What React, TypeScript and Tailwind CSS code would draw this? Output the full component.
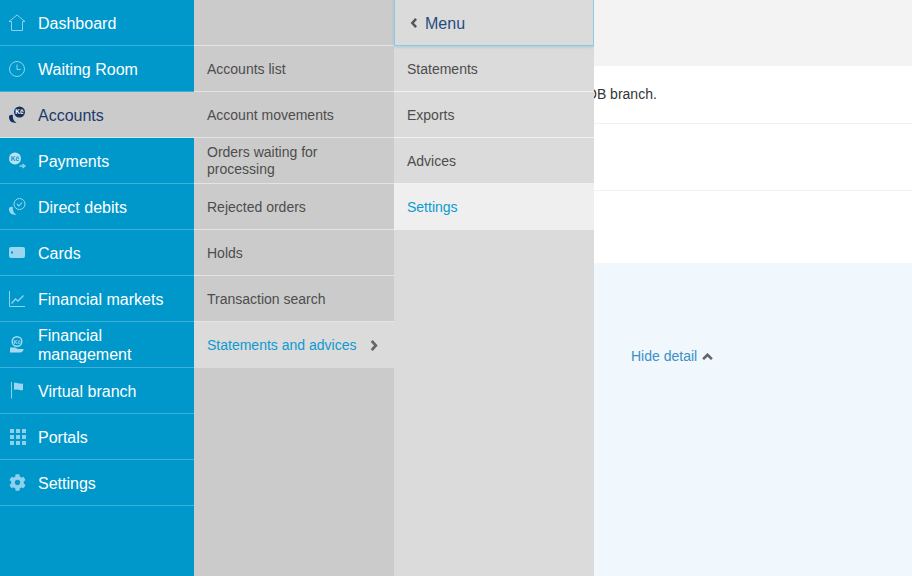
import React from 'react';
import { FaCog } from 'react-icons/fa';

const iconClass = 'w-[18px] h-[18px] text-[#8fd0ec]';

const HomeIcon = () => (
  <svg viewBox="0 0 18 18" className={iconClass} fill="none" stroke="currentColor" strokeWidth="1">
    <path d="M9 1 L17 7.5 H14.5 V16.5 H3.5 V7.5 H1 Z" />
  </svg>
);

const ClockIcon = () => (
  <svg viewBox="0 0 18 18" className={iconClass} fill="none" stroke="currentColor" strokeWidth="1">
    <circle cx="9" cy="9" r="7.5" />
    <path d="M9 4.5 V9.5 H12.5" />
  </svg>
);

const CoinIcon = () => (
  <svg viewBox="0 0 18 18" className="w-[18px] h-[18px]">
    <path d="M1 11 C1 15 4 17.5 8.5 16.5 C6 15.5 4.5 13 4.8 9 C2.5 8.5 1 9.5 1 11 Z" fill="#12305f" />
    <circle cx="11.5" cy="6" r="5.5" fill="#12305f" />
    <text x="11.5" y="8.3" textAnchor="middle" fontSize="6.5" fontWeight="700" fontFamily="Liberation Sans" fill="#ffffff">Kč</text>
  </svg>
);

const PaymentIcon = () => (
  <svg viewBox="0 0 18 18" className="w-[18px] h-[18px]">
    <circle cx="7" cy="6.5" r="6" fill="#b8e1f4" />
    <text x="7" y="8.8" textAnchor="middle" fontSize="6.5" fontWeight="700" fontFamily="Liberation Sans" fill="#0098cb">Kč</text>
    <path d="M11.5 14 H16.5 M14.5 12 L17 14 L14.5 16" stroke="#8fd0ec" strokeWidth="1.4" fill="none" />
  </svg>
);

const DebitIcon = () => (
  <svg viewBox="0 0 18 18" className="w-[18px] h-[18px]">
    <path d="M1 11 C1 15 4 17.5 8.5 16.5 C6 15.5 4.5 13 4.8 9 C2.5 8.5 1 9.5 1 11 Z" fill="#9ad6f0" />
    <circle cx="11.5" cy="6" r="5.5" fill="none" stroke="#9ad6f0" strokeWidth="1" />
    <path d="M9 6 L11 8 L14 4.5" fill="none" stroke="#9ad6f0" strokeWidth="1.1" />
  </svg>
);

const CardIcon = () => (
  <svg viewBox="0 0 18 18" className="w-[18px] h-[18px]">
    <rect x="1" y="3" width="16" height="11" rx="2" fill="#9ad6f0" />
    <rect x="3" y="7.5" width="2" height="2" fill="#0098cb" />
  </svg>
);

const ChartIcon = () => (
  <svg viewBox="0 0 18 18" className={iconClass} fill="none" stroke="currentColor" strokeWidth="1">
    <path d="M1.5 1 V16.5 H17" />
    <path d="M3.5 13.5 L7.5 9 L10 11 L15.5 5.5" strokeWidth="1.4" />
  </svg>
);

const HandIcon = () => (
  <svg viewBox="0 0 18 18" className="w-[18px] h-[18px]">
    <circle cx="9" cy="5.5" r="4.8" fill="none" stroke="#a5d9f0" strokeWidth="1.4" />
    <text x="9" y="7.6" textAnchor="middle" fontSize="5.5" fontWeight="700" fontFamily="Liberation Sans" fill="#a5d9f0">Kč</text>
    <path d="M2 11.5 H7 L10 13 H15.5 C15.5 15 14 16.5 12 16.5 H2 Z" fill="#a5d9f0" />
  </svg>
);

const FlagIcon = () => (
  <svg viewBox="0 0 18 18" className="w-[18px] h-[18px]">
    <path d="M3.5 0 V16.5" stroke="#8fd0ec" strokeWidth="1" />
    <path d="M6 1 C9 0 11 2.5 15 1.5 V8 C11 9 9 6.5 6 8 Z" fill="#9ad6f0" />
  </svg>
);

const GridIcon = () => (
  <svg viewBox="0 0 18 18" className="w-[18px] h-[18px]" fill="#8fd0ec">
    {[1, 7, 13].map(y =>
      [2, 8, 14].map(x => <rect key={`${x}-${y}`} x={x} y={y} width="4" height="4" />)
    )}
  </svg>
);

const navItems = [
  { label: 'Dashboard', icon: <HomeIcon /> },
  { label: 'Waiting Room', icon: <ClockIcon /> },
  { label: 'Accounts', icon: <CoinIcon />, active: true },
  { label: 'Payments', icon: <PaymentIcon /> },
  { label: 'Direct debits', icon: <DebitIcon /> },
  { label: 'Cards', icon: <CardIcon /> },
  { label: 'Financial markets', icon: <ChartIcon /> },
  { label: 'Financial management', icon: <HandIcon />, wrapped: true },
  { label: 'Virtual branch', icon: <FlagIcon /> },
  { label: 'Portals', icon: <GridIcon /> },
  { label: 'Settings', icon: <FaCog className="w-[17px] h-[17px] text-[#8fd0ec]" /> },
];

const accountItems = [
  { label: 'Accounts list' },
  { label: 'Account movements' },
  { label: 'Orders waiting for processing', wrapped: true },
  { label: 'Rejected orders' },
  { label: 'Holds' },
  { label: 'Transaction search' },
];

const statementItems = ['Statements', 'Exports', 'Advices'];

const App: React.FC = () => {
  return (
    <div className="flex w-[912px] h-[576px] overflow-hidden font-['Liberation_Sans',Arial,sans-serif]">
      {/* Main nav */}
      <nav className="w-[194px] shrink-0 bg-[#0098cb]">
        {navItems.map(item => (
          <div
            key={item.label}
            className={`h-[46px] flex items-center pl-[8px] pr-2 border-b text-base ${
              item.wrapped ? 'leading-[19px]' : 'leading-5'
            } ${
              item.active
                ? 'bg-[#cbcbcb] text-[#1d3a6b] border-[#d9e6ec]'
                : 'text-white border-[#3fb0da]'
            }`}
          >
            <span className="w-[18px] shrink-0 mr-[12px] flex justify-center">{item.icon}</span>
            <span className={item.wrapped ? '' : 'pt-[2px]'}>{item.label}</span>
          </div>
        ))}
      </nav>

      {/* Accounts submenu */}
      <div className="w-[200px] shrink-0 bg-[#cbcbcb] text-sm text-[#4d4d4d]">
        <div className="h-[46px] border-b border-[#e4e4e4]" />
        {accountItems.map(item => (
          <div
            key={item.label}
            className={`h-[46px] flex items-center pl-[13px] pr-4 border-b border-[#e4e4e4] ${
              item.wrapped ? 'leading-[17px]' : 'leading-5'
            }`}
          >
            {item.label}
          </div>
        ))}
        <div className="h-[46px] flex items-center justify-between pl-[13px] pr-[16px] bg-[#dbdbdb] text-[#0c9ad0]">
          <span>Statements and advices</span>
          <svg viewBox="0 0 8 12" className="w-[8px] h-[11px]" fill="none" stroke="#666666" strokeWidth="3">
            <path d="M1.5 1 L6 6 L1.5 11" />
          </svg>
        </div>
      </div>

      {/* Statements submenu */}
      <div className="w-[200px] shrink-0 bg-[#dbdbdb] text-sm text-[#4d4d4d]">
        <div className="h-[46px] flex items-center pl-[15px] gap-[7px] border border-[#8cc8de] border-t-0 text-base text-[#1f4e80] shadow-[0_1px_3px_rgba(120,190,220,0.5)]">
          <svg viewBox="0 0 8 12" className="w-[8px] h-[10px]" fill="none" stroke="#555555" strokeWidth="3">
            <path d="M6.5 1 L2 6 L6.5 11" />
          </svg>
          <span className="pt-[2px]">Menu</span>
        </div>
        {statementItems.map(item => (
          <div key={item} className="h-[46px] flex items-center pl-[13px] border-b border-[#f0f0f0]">
            {item}
          </div>
        ))}
        <div className="h-[46px] flex items-center pl-[13px] bg-[#efefef] text-[#0c9ad0]">Settings</div>
      </div>

      {/* Page behind the menu */}
      <main className="flex-1 min-w-0 flex flex-col overflow-hidden text-sm text-[#333333]">
        <div className="h-[66px] bg-[#f3f3f3]" />
        <div className="h-[58px] pt-[20px] border-b border-[#f1f1f1] bg-white whitespace-nowrap leading-4 -ml-[8px]">
          OB branch.
        </div>
        <div className="h-[67px] border-b border-[#f1f1f1] bg-white" />
        <div className="h-[72px] bg-white" />
        <div className="flex-1 bg-[#f0f7fd] pl-[37px] pt-[85px]">
          <div className="flex items-center gap-[5px] text-[#3c8fc4] leading-4">
            <span>Hide detail</span>
            <svg viewBox="0 0 12 8" className="w-[11px] h-[7px]" fill="none" stroke="#666666" strokeWidth="3">
              <path d="M1 7 L6 2 L11 7" />
            </svg>
          </div>
        </div>
      </main>
    </div>
  );
};

export default App;
